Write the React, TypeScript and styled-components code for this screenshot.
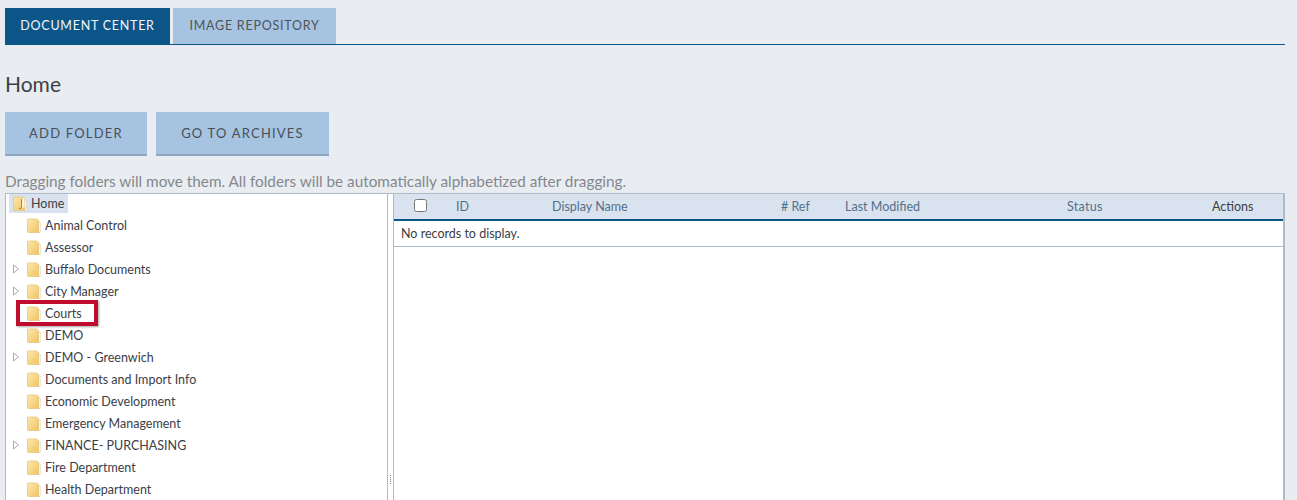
import styled, { createGlobalStyle } from 'styled-components';

const GlobalStyle = createGlobalStyle`
  html, body {
    margin: 0;
    height: 500px;
    overflow: hidden;
    background: #e9edf2;
    font-family: Lato, "Open Sans", sans-serif;
  }
`;

interface Folder {
  name: string;
  expandable?: boolean;
  marked?: boolean;
}

const folders: Folder[] = [
  { name: 'Animal Control' },
  { name: 'Assessor' },
  { name: 'Buffalo Documents', expandable: true },
  { name: 'City Manager', expandable: true },
  { name: 'Courts', marked: true },
  { name: 'DEMO' },
  { name: 'DEMO - Greenwich', expandable: true },
  { name: 'Documents and Import Info' },
  { name: 'Economic Development' },
  { name: 'Emergency Management' },
  { name: 'FINANCE- PURCHASING', expandable: true },
  { name: 'Fire Department' },
  { name: 'Health Department' },
];

const FolderIcon = ({ open }: { open?: boolean }) => (
  <svg width="14" height="15" viewBox="0 0 14 15">
    <defs>
      <linearGradient id="folderFill" x1="0" y1="0" x2="1" y2="1">
        <stop offset="0" stopColor="#fde9b0" />
        <stop offset="1" stopColor="#f0c35f" />
      </linearGradient>
    </defs>
    <path d="M11.5 4 H13.2 V14.5 H11.5 Z" fill="#fff" stroke="#d9cfae" strokeWidth="0.7" />
    <path d="M1.5 1 H9.5 L11.5 2.5 V14.5 H1.5 Q0.5 14.5 0.5 13.5 V2 Q0.5 1 1.5 1 Z" fill="url(#folderFill)" stroke="#e6c77c" strokeWidth="0.8" />
    {open && (
      <>
        <path d="M8.5 3 L11.5 2.5 V11 L8.5 12 Z" fill="#fff6d8" />
        <path d="M8.5 3 V11 Q8.5 13 6 12.5" fill="none" stroke="#a98338" strokeWidth="1" />
      </>
    )}
  </svg>
);

const Arrow = () => (
  <svg width="8" height="10" viewBox="0 0 8 10">
    <path d="M1.5 1 L6.5 5 L1.5 9 Z" fill="#fff" stroke="#a5abb0" strokeWidth="1" />
  </svg>
);

const App = () => (
  <Page>
    <GlobalStyle />
    <TabBar>
      <Tab $active $width={165}>DOCUMENT CENTER</Tab>
      <Tab $width={163}>IMAGE REPOSITORY</Tab>
    </TabBar>
    <Title>Home</Title>
    <Actions>
      <ActionButton $width={142}>ADD FOLDER</ActionButton>
      <ActionButton $width={173}>GO TO ARCHIVES</ActionButton>
    </Actions>
    <Hint>Dragging folders will move them. All folders will be automatically alphabetized after dragging.</Hint>
    <Split>
      <TreePane>
        <RootRow>
          <RootLabel>
            <FolderIcon open />
            <span>Home</span>
          </RootLabel>
        </RootRow>
        {folders.map((folder) => (
          <TreeRow key={folder.name}>
            <Toggle>{folder.expandable && <Arrow />}</Toggle>
            <FolderLabel $marked={folder.marked}>
              <FolderIcon />
              <span>{folder.name}</span>
            </FolderLabel>
          </TreeRow>
        ))}
      </TreePane>
      <Splitter>
        <Grip />
      </Splitter>
      <GridPane>
        <GridHeader>
          <CheckCell>
            <Check type="checkbox" aria-label="Select all" />
          </CheckCell>
          <HeadCell $width={96}>ID</HeadCell>
          <HeadCell $width={229}>Display Name</HeadCell>
          <HeadCell $width={64}>#&nbsp;Ref</HeadCell>
          <HeadCell $width={222}>Last Modified</HeadCell>
          <HeadCell $width={145} $spaced>Status</HeadCell>
          <HeadCell $dark>Actions</HeadCell>
        </GridHeader>
        <EmptyRow>No records to display.</EmptyRow>
      </GridPane>
    </Split>
  </Page>
);

const Page = styled.div`
  height: 500px;
  padding: 8px 12px 0 5px;
  box-sizing: border-box;
  overflow: hidden;
`;

const TabBar = styled.div`
  display: flex;
  gap: 3px;
  height: 37px;
  box-sizing: border-box;
  border-bottom: 1px solid #0b5588;
`;

const Tab = styled.div<{ $active?: boolean; $width: number }>`
  width: ${(p) => p.$width}px;
  height: ${(p) => (p.$active ? '37px' : '36px')};
  padding-bottom: 2px;
  display: flex;
  align-items: center;
  justify-content: center;
  box-sizing: border-box;
  font-size: 12.5px;
  letter-spacing: 0.75px;
  background: ${(p) => (p.$active ? '#0b5588' : '#a6c4e2')};
  color: ${(p) => (p.$active ? '#f3f7fb' : '#4f5358')};
`;

const Title = styled.h1`
  margin: 26px 0 0;
  height: 26px;
  line-height: 26px;
  font-size: 21px;
  font-weight: 400;
  color: #3d4145;
`;

const Actions = styled.div`
  display: flex;
  gap: 9px;
  margin-top: 15px;
`;

const ActionButton = styled.div<{ $width: number }>`
  width: ${(p) => p.$width}px;
  height: 44px;
  padding-bottom: 1px;
  box-sizing: border-box;
  display: flex;
  align-items: center;
  justify-content: center;
  background: #a6c4e2;
  border-bottom: 2px solid #8ea6c2;
  font-size: 13px;
  letter-spacing: 1.2px;
  color: #4a4f55;
`;

const Hint = styled.div`
  margin-top: 16px;
  height: 21px;
  line-height: 19px;
  font-size: 15.3px;
  color: #84888c;
`;

const Split = styled.div`
  display: flex;
  height: 400px;
  background: #fff;
  border: 1px solid #aebcc8;
  border-right: 2px solid #aebcc8;
  border-bottom: 0;
  box-sizing: border-box;
`;

const TreePane = styled.div`
  width: 381px;
  flex: none;
  overflow: hidden;
`;

const RootRow = styled.div`
  height: 20px;
  padding-left: 3px;
  display: flex;
  align-items: flex-start;
`;

const RootLabel = styled.div`
  display: flex;
  align-items: center;
  gap: 4px;
  height: 19px;
  padding: 0 4px;
  background: #d9e3ef;
  font-size: 12.5px;
  color: #3b4045;
`;

const TreeRow = styled.div`
  height: 22px;
  display: flex;
  align-items: center;
  padding-left: 6px;
`;

const Toggle = styled.div`
  width: 15px;
  flex: none;
  display: flex;
  align-items: center;
`;

const FolderLabel = styled.div<{ $marked?: boolean }>`
  position: relative;
  display: flex;
  align-items: center;
  gap: 4px;
  font-size: 12.5px;
  color: #3b4045;
  ${(p) =>
    p.$marked &&
    `
    &::before {
      content: '';
      position: absolute;
      left: -11px;
      right: -16px;
      top: -6px;
      bottom: -5px;
      border: 4px solid #c00d2e;
      box-shadow: 1px 1px 2px rgba(0, 0, 0, 0.35);
    }
  `}
`;

const Splitter = styled.div`
  width: 5px;
  flex: none;
  border-left: 1px solid #aebcc8;
  border-right: 1px solid #aebcc8;
`;

const Grip = styled.div`
  width: 1px;
  height: 9px;
  margin: 281px 0 0 2px;
  background: repeating-linear-gradient(#7f8f99 0 1px, transparent 1px 2px);
`;

const GridPane = styled.div`
  flex: 1;
  min-width: 0;
`;

const GridHeader = styled.div`
  height: 27px;
  box-sizing: border-box;
  display: flex;
  align-items: center;
  background: #d9e3ef;
  border-bottom: 2px solid #0b5588;
`;

const CheckCell = styled.div`
  width: 62px;
  flex: none;
  padding-left: 20px;
  box-sizing: border-box;
  display: flex;
  align-items: center;
`;

const Check = styled.input`
  width: 13px;
  height: 13px;
  margin: 0 0 2px;
`;

const HeadCell = styled.div<{ $width?: number; $dark?: boolean; $spaced?: boolean }>`
  ${(p) => (p.$width ? `width: ${p.$width}px; flex: none;` : 'flex: 1;')}
  font-size: 12.5px;
  letter-spacing: ${(p) => (p.$spaced ? '0.3px' : '0')};
  color: ${(p) => (p.$dark ? '#3b4045' : '#53708a')};
`;

const EmptyRow = styled.div`
  height: 26px;
  box-sizing: border-box;
  padding-left: 7px;
  display: flex;
  align-items: center;
  border-bottom: 1px solid #aebcc8;
  font-size: 12.5px;
  color: #3b4045;
`;

export default App;
